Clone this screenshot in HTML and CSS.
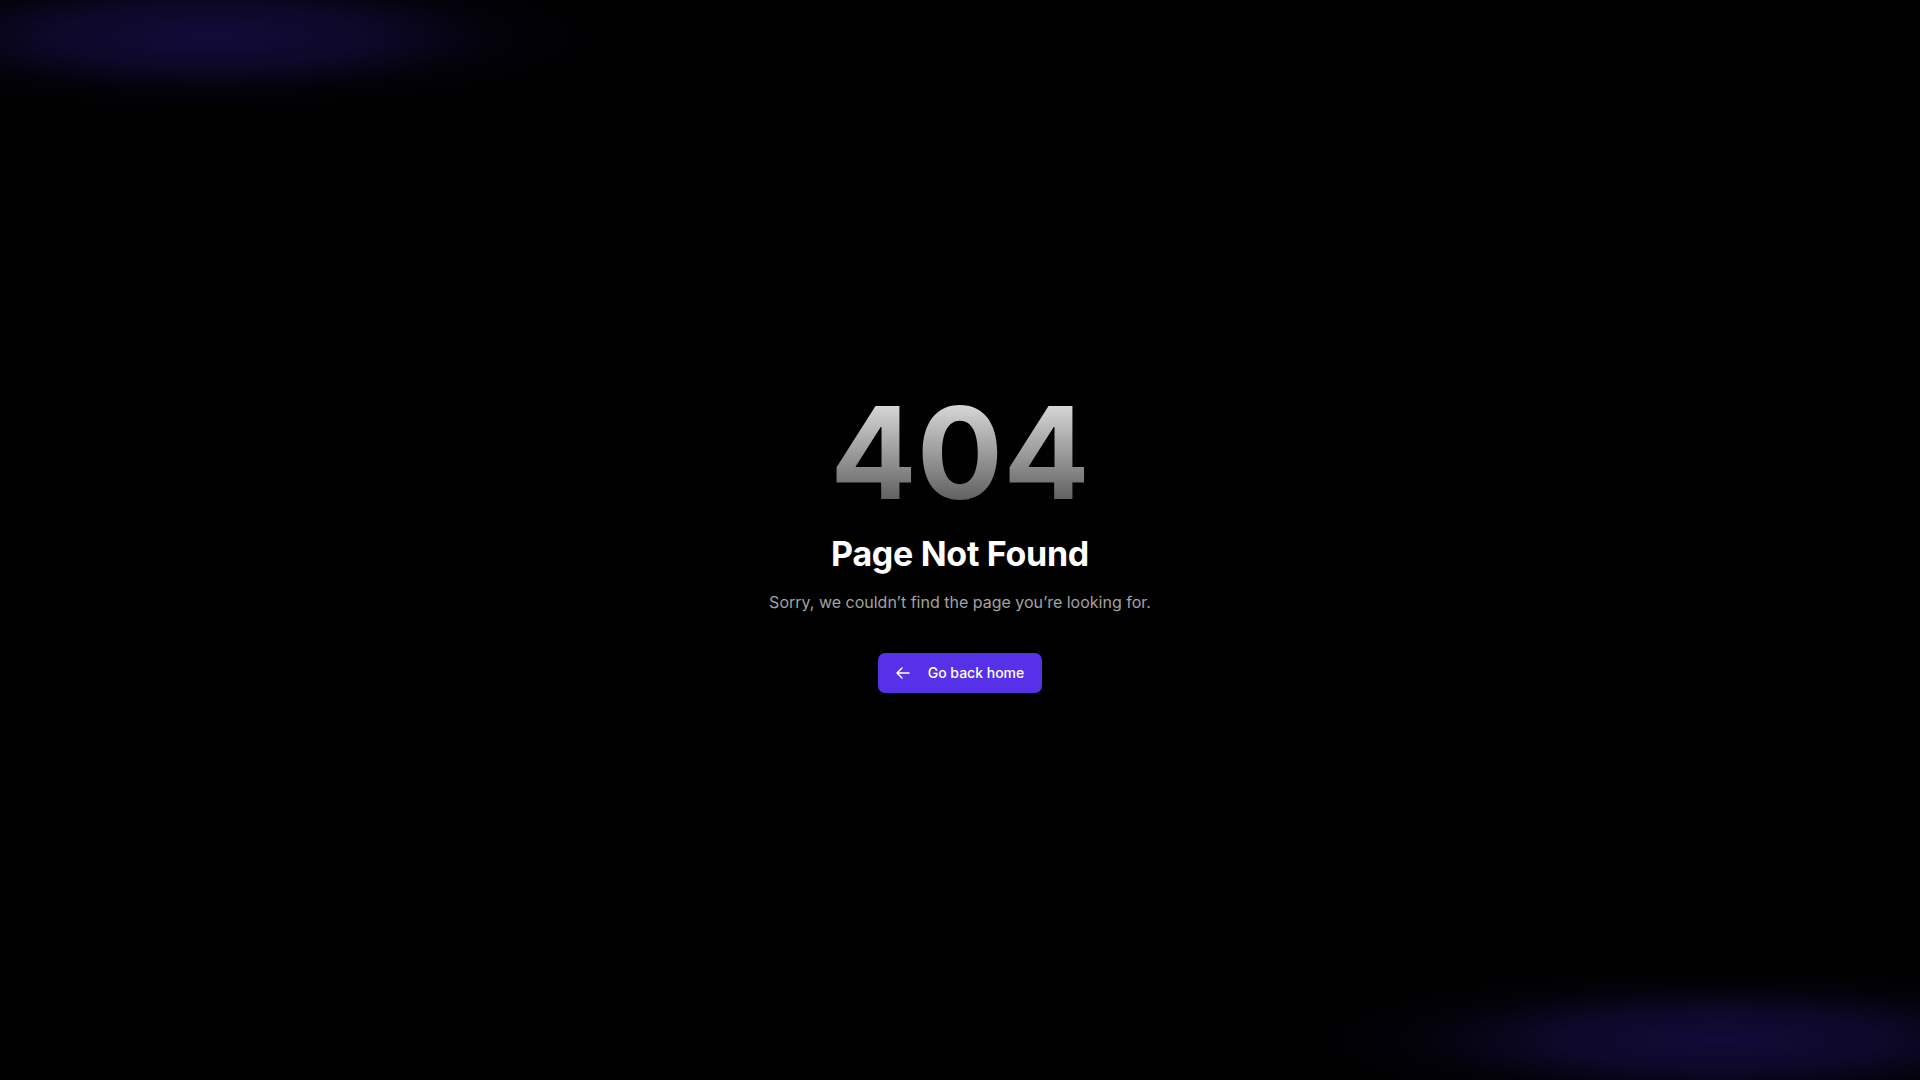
FILE: index.html
```html
<!DOCTYPE html>
<html lang="en">
<head>
<meta charset="utf-8">
<title>404 - Page Not Found</title>
<link rel="stylesheet" href="styles.css">
</head>
<body>
<main class="page">
  <section class="notfound">
    <h1 class="code">404</h1>
    <h2 class="title">Page Not Found</h2>
    <p class="message">Sorry, we couldn’t find the page you’re looking for.</p>
    <a class="home-btn" href="#">
      <svg class="home-icon" viewBox="0 0 24 24" fill="none" stroke="currentColor" stroke-width="2.2" stroke-linecap="round" stroke-linejoin="round" aria-hidden="true"><path d="M10.5 19.5 3 12m0 0 7.5-7.5M3 12h18"/></svg>
      <span>Go back home</span>
    </a>
  </section>
</main>
</body>
</html>
```

FILE: styles.css
```css
* { box-sizing: border-box; }
html, body { margin: 0; padding: 0; }
body {
  min-height: 100vh;
  background-color: #000;
  background-image:
    radial-gradient(ellipse 400px 76px at 210px 36px, rgba(20, 11, 60, 0.95), rgba(18, 10, 54, 0.75) 40%, rgba(10, 6, 30, 0.35) 70%, rgba(0, 0, 0, 0) 100%),
    radial-gradient(ellipse 420px 74px at 1720px 1040px, rgba(20, 11, 60, 0.95), rgba(18, 10, 54, 0.75) 40%, rgba(10, 6, 30, 0.35) 70%, rgba(0, 0, 0, 0) 100%);
  background-repeat: no-repeat;
  font-family: Inter, "Noto Sans", sans-serif;
  color: #fff;
}
.page {
  min-height: 100vh;
  display: flex;
  align-items: center;
  justify-content: center;
}
.notfound {
  display: flex;
  flex-direction: column;
  align-items: center;
  text-align: center;
}
.code {
  margin: 0;
  font-family: Inter, "Liberation Sans", sans-serif;
  font-weight: 700;
  font-size: 128px;
  line-height: 130px;
  letter-spacing: 0;
  background: linear-gradient(to bottom, #ececec, #4a4a4a);
  -webkit-background-clip: text;
  background-clip: text;
  color: transparent;
}
.title {
  margin: 16px 0 0;
  font-size: 34px;
  line-height: 40px;
  font-weight: 700;
  letter-spacing: -0.3px;
  color: #fff;
}
.message {
  margin: 14px 0 0;
  font-size: 16px;
  line-height: 28px;
  color: #a3a3a3;
}
.home-btn {
  margin-top: 37px;
  height: 40px;
  display: inline-flex;
  align-items: center;
  gap: 17px;
  padding: 0 18px 0 17px;
  border-radius: 7px;
  background: #5631e8;
  color: #fff;
  text-decoration: none;
  font-size: 14px;
  font-weight: 500;
}
.home-icon {
  width: 16px;
  height: 16px;
  flex: none;
}
```
